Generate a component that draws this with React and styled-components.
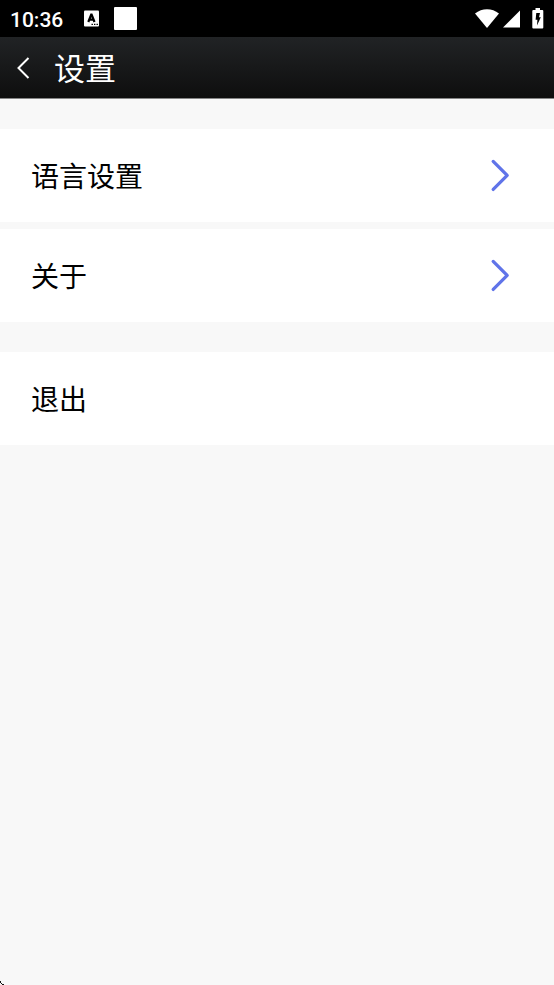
import React from "react";
import styled, { createGlobalStyle } from "styled-components";

const GlobalStyle = createGlobalStyle`
  * { box-sizing: border-box; }
  body {
    margin: 0;
    background: #f8f8f8;
    font-family: Roboto, "Noto Sans CJK SC", sans-serif;
  }
`;

const Screen = styled.div`
  min-height: 100vh;
  background: #f8f8f8;
`;

const StatusBar = styled.div`
  display: flex;
  align-items: center;
  justify-content: space-between;
  height: 37px;
  padding: 0 10px;
  background: #000;
  color: #fff;
`;

const StatusGroup = styled.div`
  display: flex;
  align-items: center;
`;

const Clock = styled.time`
  margin-right: 21px;
  padding-top: 2px;
  font-size: 21px;
  font-weight: 500;
  line-height: 26px;
`;

const Notice = styled.span`
  width: 23px;
  height: 23px;
  margin-left: 15px;
  border-radius: 1px;
  background: #fff;
`;

const StatusIcon = styled.svg`
  display: block;
  flex: none;
  margin-left: ${({ $gap }) => $gap || 0}px;
`;

const TitleBar = styled.header`
  display: flex;
  align-items: center;
  height: 62px;
  padding-left: 16px;
  border-bottom: 1px solid #858585;
  background: linear-gradient(#212325, #0e0e0e);
  color: #fff;
`;

const BackButton = styled.button`
  display: flex;
  padding: 0;
  border: 0;
  background: none;
  color: inherit;
  cursor: pointer;
`;

const Title = styled.h1`
  margin: 0 0 0 23px;
  padding-top: 5px;
  font-size: 31px;
  font-weight: 400;
  line-height: 44px;
`;

const Content = styled.main`
  display: grid;
  gap: 30px;
  padding-top: 30px;
`;

const Group = styled.section`
  display: grid;
  gap: 7px;
`;

const Item = styled.button`
  display: flex;
  align-items: center;
  justify-content: space-between;
  width: 100%;
  height: 93px;
  padding: 0 44px 0 31px;
  border: 0;
  background: #fff;
  color: #000;
  font-family: inherit;
  font-size: 28px;
  line-height: 40px;
  text-align: left;
  cursor: pointer;
`;

const Label = styled.span`
  padding-top: 5px;
`;

const CornerMark = styled.svg`
  position: fixed;
  left: 0;
  bottom: 0;
`;

const Chevron = () => (
  <svg width="20" height="35" viewBox="0 0 20 35" fill="none" aria-hidden="true">
    <path d="M3.2 3.4L17.2 17.4L3.2 31.4" stroke="#6074e9" strokeWidth="3.3" strokeLinecap="round" strokeLinejoin="round" />
  </svg>
);

const SettingsItem = ({ label, chevron }) => (
  <Item type="button">
    <Label>{label}</Label>
    {chevron && <Chevron />}
  </Item>
);

export default function App() {
  return (
    <Screen>
      <GlobalStyle />
      <StatusBar>
        <StatusGroup>
          <Clock>10:36</Clock>
          <StatusIcon width="15" height="17" viewBox="0 0 15 17" aria-hidden="true">
            <rect y="0.5" width="15" height="16" rx="1" fill="#fff" />
            <path d="M4.3 12L7.2 4.5H7.6L10.5 12M5.5 9.6H9.3" fill="none" stroke="#000" strokeWidth="2.2" />
            <path d="M7.5 13.7h1.4v1.4H7.5zM10 13.7h1.4v1.4H10zM12.5 13.7h1.4v1.4h-1.4z" fill="#000" />
          </StatusIcon>
          <Notice />
        </StatusGroup>
        <StatusGroup>
          <StatusIcon width="24" height="19" viewBox="0 0 24 19" aria-hidden="true">
            <path d="M0 4.5C7 -1.2 17 -1.2 24 4.5L12 19Z" fill="#fff" />
          </StatusIcon>
          <StatusIcon $gap={4} width="17" height="19" viewBox="0 0 17 19" aria-hidden="true">
            <path d="M17 1.5V18.5H0Z" fill="#fff" />
          </StatusIcon>
          <StatusIcon $gap={12} width="12" height="21" viewBox="0 0 12 21" aria-hidden="true">
            <path d="M3.5 0h4.5v2h2.3q1 0 1 1v16.5q0 1-1 1h-9q-1 0-1-1V3q0-1 1-1H3.5Z" fill="#fff" />
            <path d="M4.3 5H8L7 9.2H8.8L5 17.5L5.4 11.8H3.6Z" fill="#000" />
          </StatusIcon>
        </StatusGroup>
      </StatusBar>
      <TitleBar>
        <BackButton type="button" aria-label="返回">
          <svg width="15" height="24" viewBox="0 0 15 24" fill="none" aria-hidden="true">
            <path d="M12.5 2L2.5 12L12.5 22" stroke="currentColor" strokeWidth="2" />
          </svg>
        </BackButton>
        <Title>设置</Title>
      </TitleBar>
      <Content>
        <Group>
          <SettingsItem label="语言设置" chevron />
          <SettingsItem label="关于" chevron />
        </Group>
        <Group>
          <SettingsItem label="退出" />
        </Group>
      </Content>
      <CornerMark width="4" height="4" viewBox="0 0 4 4" shapeRendering="crispEdges" aria-hidden="true">
        <path d="M0 0h1v2H0zM1 2h1v1H1zM2 3h2v1H2z" fill="#111" />
      </CornerMark>
    </Screen>
  );
}
